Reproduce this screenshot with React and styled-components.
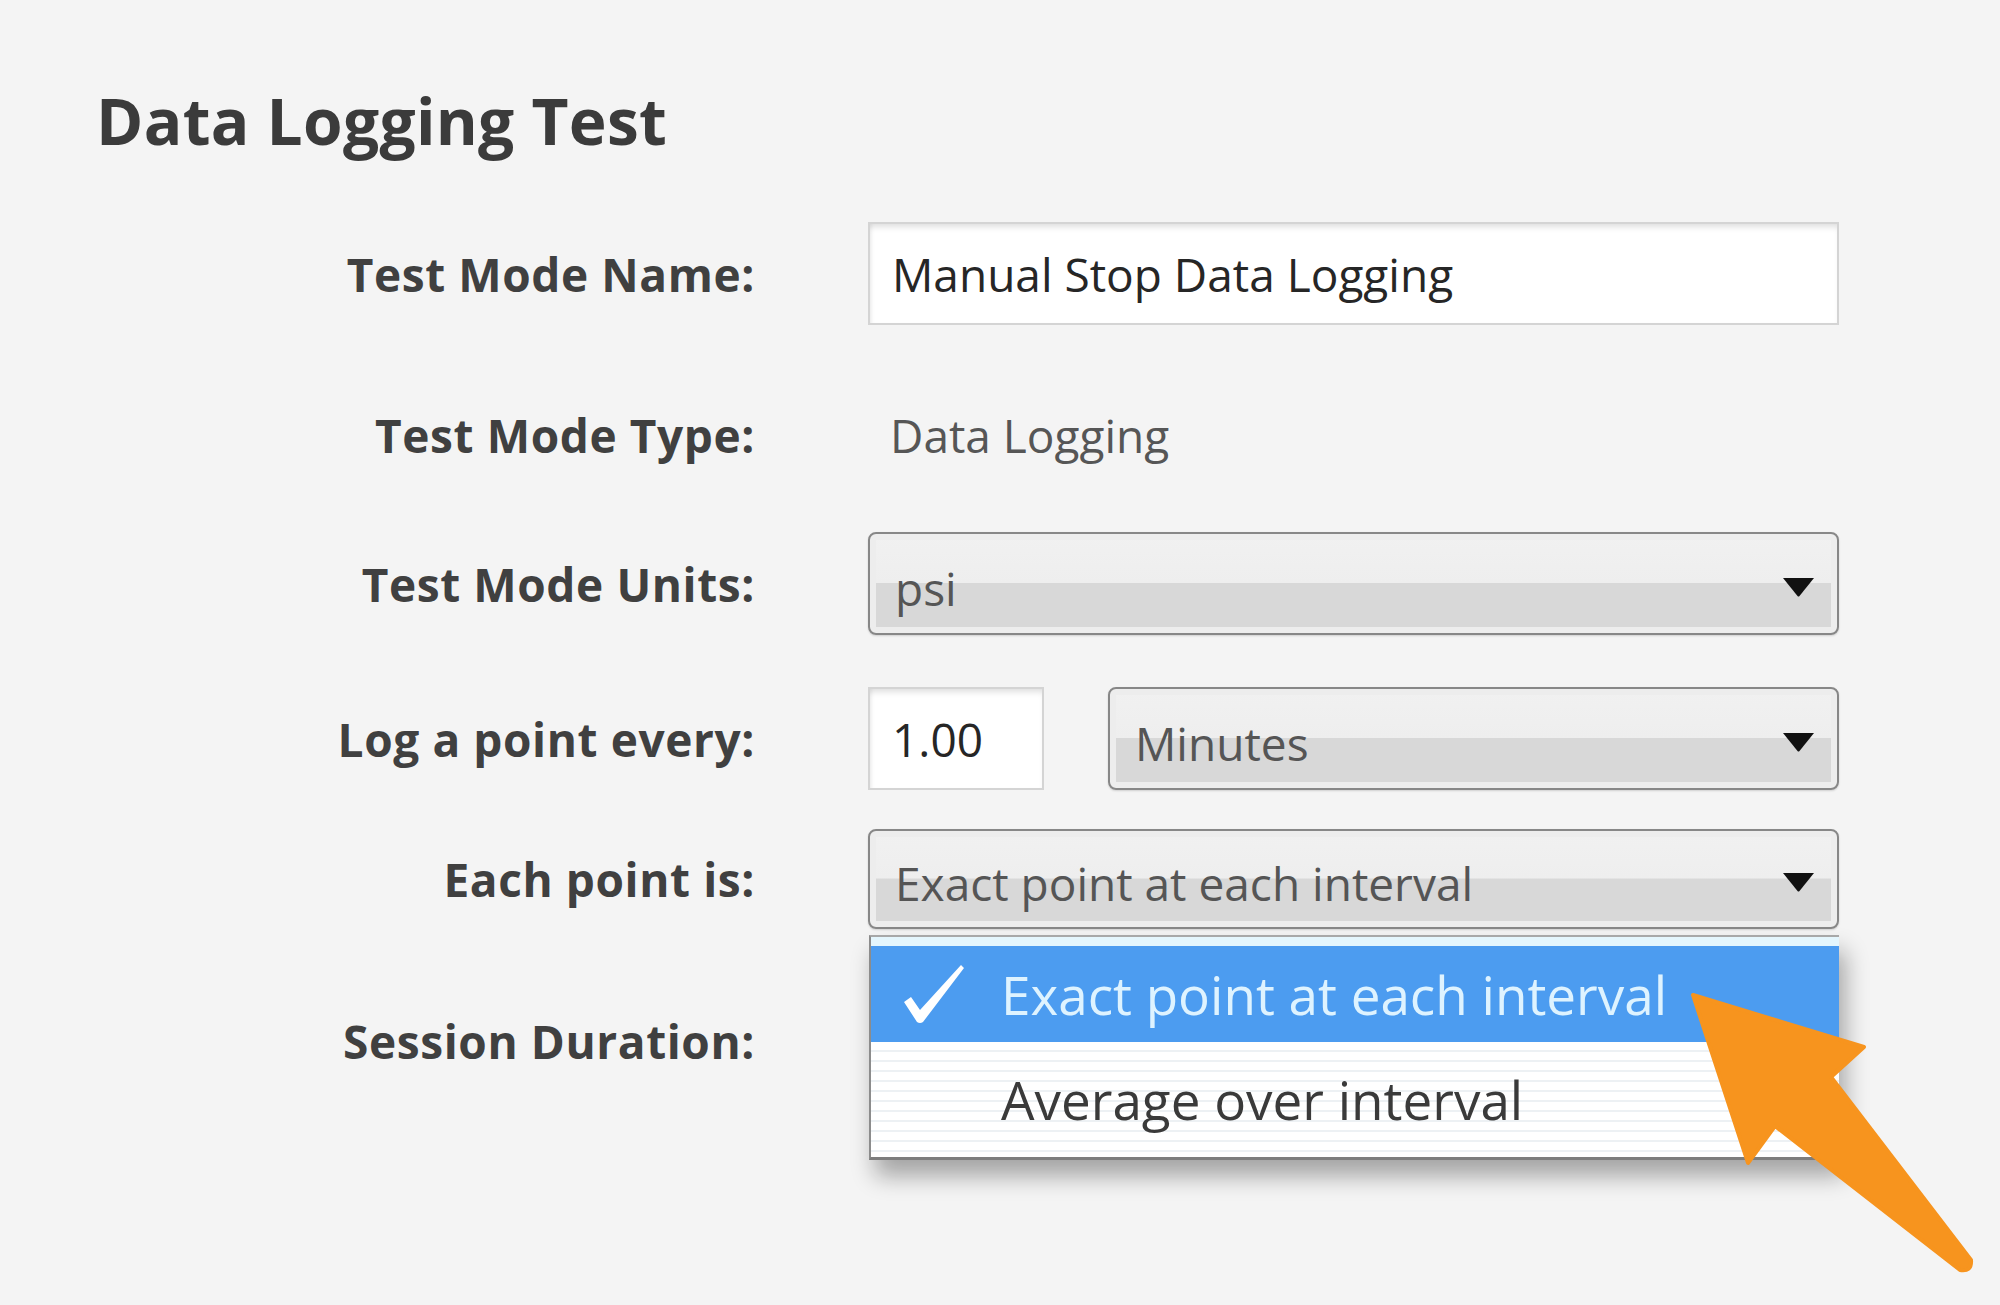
import React from "react";
import styled, { createGlobalStyle } from "styled-components";

const GlobalStyle = createGlobalStyle`
  html, body {
    margin: 0;
    padding: 0;
    background: #f4f4f4;
  }
  body {
    font-family: "Open Sans", "Noto Sans", sans-serif;
  }
`;

const Page = styled.div`
  position: relative;
  width: 2000px;
  min-height: 1305px;
  box-sizing: border-box;
  padding: 89px 0 0 96px;
  background: #f4f4f4;
  overflow: hidden;
`;

const Title = styled.h1`
  margin: 0;
  font-size: 64px;
  line-height: 64px;
  font-weight: 700;
  color: #3b3b3b;
  letter-spacing: 0.3px;
`;

const Form = styled.div`
  display: flex;
  flex-direction: column;
  margin-top: 69px;
`;

const Row = styled.div`
  display: grid;
  grid-template-columns: 659px 971px;
  column-gap: 113px;
  align-items: center;
  height: ${({ $h }) => $h || 103}px;
  margin-top: ${({ $mt }) => $mt || 0}px;
`;

const Label = styled.div`
  text-align: right;
  font-size: 46px;
  font-weight: 700;
  color: #404040;
  letter-spacing: 0.6px;
`;

const TextInput = styled.div`
  box-sizing: border-box;
  height: ${({ $h }) => $h || 103}px;
  width: ${({ $w }) => ($w ? `${$w}px` : "100%")};
  flex-shrink: 0;
  display: flex;
  align-items: center;
  padding: 0 22px;
  background: #fff;
  border: 2px solid #d4d4d4;
  box-shadow: inset 0 6px 6px -3px rgba(0, 0, 0, 0.13),
    inset 4px 0 4px -3px rgba(0, 0, 0, 0.08);
  font-size: 46px;
  color: #262626;
`;

const StaticValue = styled.div`
  padding-left: 22px;
  font-size: 46px;
  color: #565656;
`;

const SelectWrap = styled.div`
  position: relative;
  flex: 1;
`;

const SelectBox = styled.div`
  box-sizing: border-box;
  height: ${({ $h }) => $h || 103}px;
  display: flex;
  align-items: center;
  justify-content: space-between;
  padding: 8px 22px 0 25px;
  border: 2px solid #878787;
  border-radius: 8px;
  background: linear-gradient(
    to bottom,
    #f1f1f1 0%,
    #eeeeee 49%,
    #d8d8d8 50%,
    #d8d8d8 100%
  );
  box-shadow: inset 0 0 0 6px #ededed, 0 1px 2px rgba(0, 0, 0, 0.15);
  font-size: 46px;
  color: #555;
`;

const Caret = styled.svg`
  width: 33px;
  height: 20px;
  margin-top: -2px;
  flex-shrink: 0;
`;

const SplitControls = styled.div`
  display: flex;
  align-items: center;
  gap: 64px;
`;

const Menu = styled.div`
  position: absolute;
  z-index: 5;
  top: calc(100% + 6px);
  left: 1px;
  right: 0;
  border-top: 2px solid #a8a8a8;
  border-left: 2px solid #8c8c8c;
  border-bottom: 3px solid #7d7d7d;
  background: #fff;
  box-shadow: 6px 16px 22px rgba(0, 0, 0, 0.33);
`;

const MenuTopStrip = styled.div`
  height: 9px;
  background: #e4f6fd;
`;

const MenuItem = styled.div`
  display: grid;
  grid-template-columns: 130px 1fr;
  align-items: center;
  height: ${({ $h }) => $h}px;
  font-size: 53px;
  background: ${({ $active }) =>
    $active
      ? "#4c9cf0"
      : "repeating-linear-gradient(to bottom, #ffffff 0px, #ffffff 8px, #edf1f4 8px, #edf1f4 10px)"};
  color: ${({ $active }) => ($active ? "#def3ff" : "#3a3a3a")};
`;

const CheckCell = styled.div`
  display: flex;
  align-items: center;
  padding-left: 32px;
`;

const ArrowOverlay = styled.svg`
  position: absolute;
  left: 0;
  top: 0;
  width: 2000px;
  height: 1305px;
  pointer-events: none;
  z-index: 10;
`;

const DownCaret = () => (
  <Caret viewBox="0 0 33 20">
    <path d="M1 1 H32 L17.5 19 Q16.5 20 15.5 19 Z" fill="#111" />
  </Caret>
);

const Select = ({ value, h, children }) => (
  <SelectWrap>
    <SelectBox $h={h}>
      <span>{value}</span>
      <DownCaret />
    </SelectBox>
    {children}
  </SelectWrap>
);

const Check = () => (
  <svg width="62" height="60" viewBox="0 0 62 60">
    <path
      d="M1 38 L8 33 L17 46 L58 1 L61 4 L20 58 Q17 60 14 58 Z"
      fill="#ffffff"
    />
  </svg>
);

const App = () => {
  return (
    <Page>
      <GlobalStyle />
      <Title>Data Logging Test</Title>
      <Form>
        <Row>
          <Label>Test Mode Name:</Label>
          <TextInput>Manual Stop Data Logging</TextInput>
        </Row>
        <Row $mt={58}>
          <Label>Test Mode Type:</Label>
          <StaticValue>Data Logging</StaticValue>
        </Row>
        <Row $mt={46}>
          <Label>Test Mode Units:</Label>
          <Select value="psi" />
        </Row>
        <Row $mt={52}>
          <Label>Log a point every:</Label>
          <SplitControls>
            <TextInput $w={176}>1.00</TextInput>
            <Select value="Minutes" />
          </SplitControls>
        </Row>
        <Row $mt={39} $h={100}>
          <Label>Each point is:</Label>
          <Select value="Exact point at each interval" h={100}>
            <Menu>
              <MenuTopStrip />
              <MenuItem $active $h={96}>
                <CheckCell>
                  <Check />
                </CheckCell>
                <span>Exact point at each interval</span>
              </MenuItem>
              <MenuItem $h={115}>
                <span />
                <span>Average over interval</span>
              </MenuItem>
            </Menu>
          </Select>
        </Row>
        <Row $mt={60}>
          <Label>Session Duration:</Label>
          <span />
        </Row>
      </Form>
      <ArrowOverlay viewBox="0 0 2000 1305">
        <path
          d="M1693 995 L1864 1047 L1831 1077 L1971 1260 Q1972 1272 1960 1270 L1775 1126 L1748 1163 Z"
          fill="#f7941e"
          stroke="#f7941e"
          strokeWidth="4"
          strokeLinejoin="round"
        />
      </ArrowOverlay>
    </Page>
  );
};

export default App;
